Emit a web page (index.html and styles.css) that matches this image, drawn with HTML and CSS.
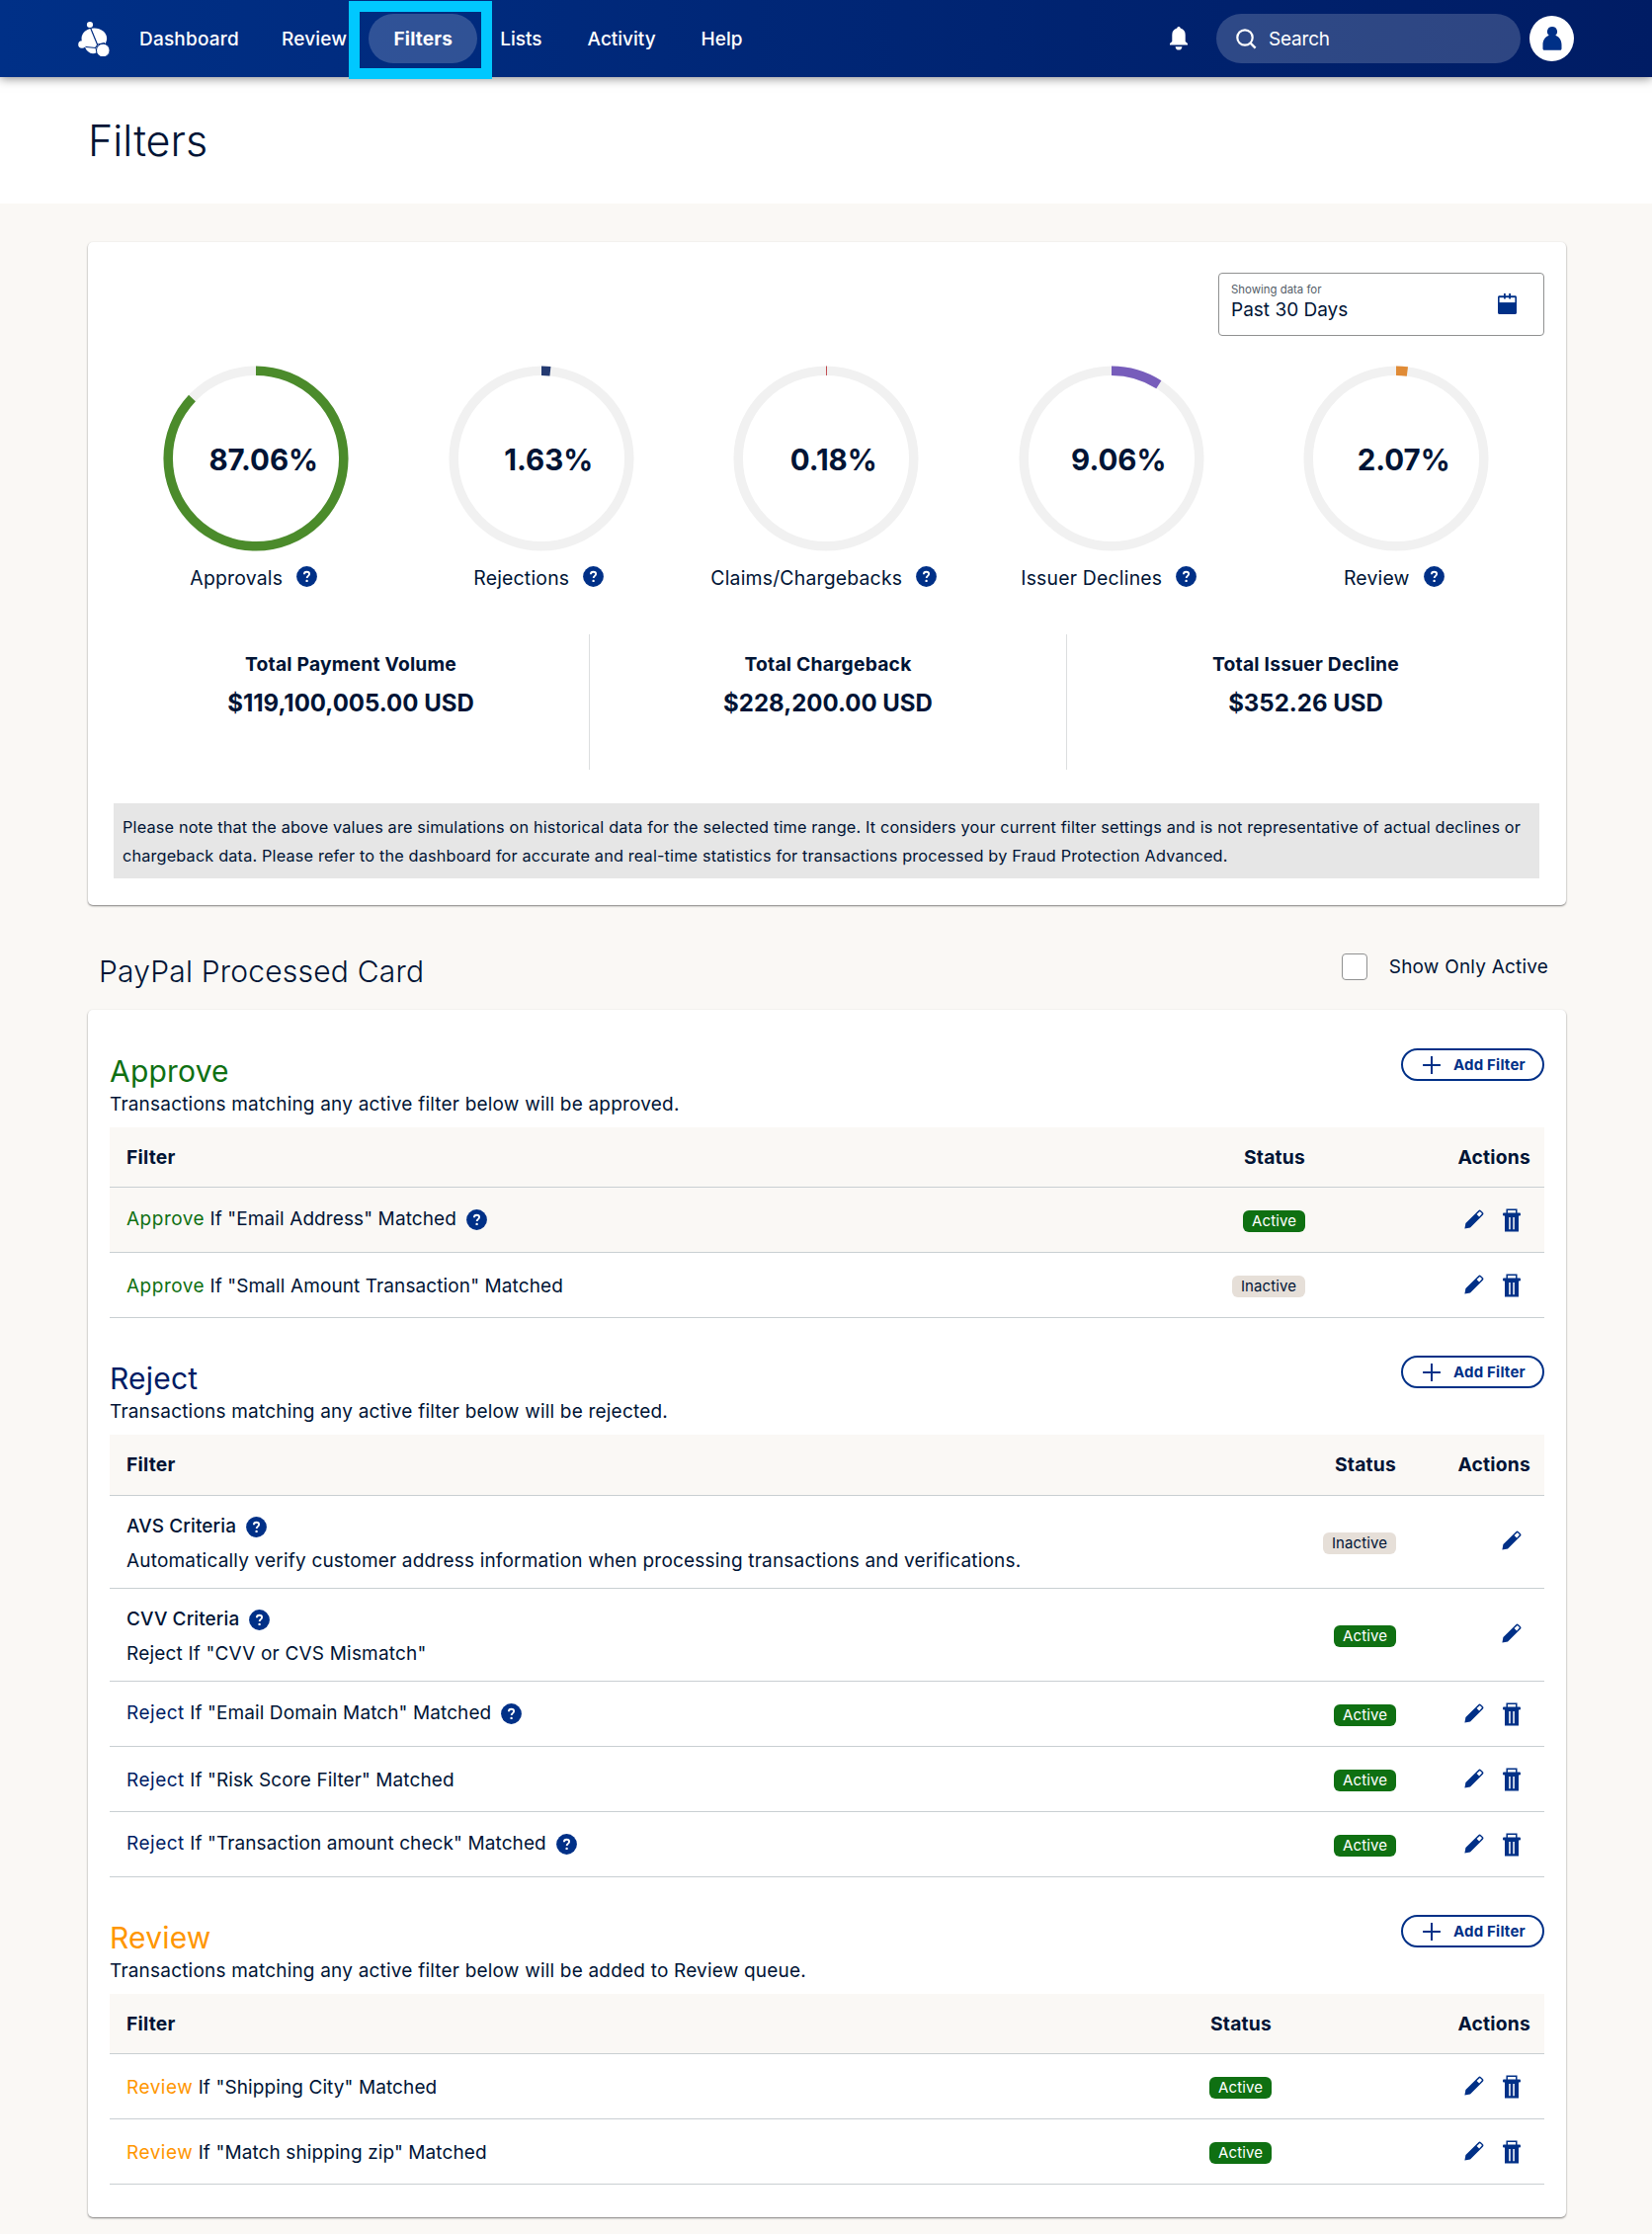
FILE: index.html
```
<!DOCTYPE html>
<html lang="en">
<head>
	<meta charset="UTF-8">
	<title>Filters</title>
	<link rel="stylesheet" href="styles.css">
</head>
<body>
	<svg class="sprite" width="0" height="0">
		<symbol id="help" viewBox="0 0 21 21">
			<circle cx="10.5" cy="10.5" r="10.4" fill="#003087"/>
			<path d="M7.9 8.3c0-1.6 1.1-2.5 2.6-2.5s2.6.9 2.6 2.2c0 1.9-2.4 1.9-2.4 4" fill="none" stroke="#fff" stroke-width="1.9"/>
			<circle cx="10.6" cy="14.9" r="1.2" fill="#fff"/>
		</symbol>
		<symbol id="pencil" viewBox="0 0 20 20">
			<path d="M.4 19.6l1-5.6L14.3 1.2c.9-.9 1.7-.9 2.6 0l1.9 1.9c.9.9.9 1.7 0 2.6L6 18.6z" fill="#003087"/>
			<path d="M12.6 4.9l2.7-2.5c.3-.3.6-.3.9 0l1.4 1.4c.3.3.3.6 0 .9l-2.5 2.7z" fill="#fff"/>
		</symbol>
		<symbol id="trash" viewBox="0 0 18 24">
			<path d="M4.2 5V1.2h9.6V5" fill="none" stroke="#003087" stroke-width="1.5"/>
			<rect y="4.6" width="18" height="3" rx="1" fill="#003087"/>
			<path d="M2 7h14v16.6H2zM6.2 9v12.3h1.5V9zM10.3 9v12.3h1.5V9z" fill="#003087" fill-rule="evenodd"/>
		</symbol>
		<symbol id="plus" viewBox="0 0 18 18">
			<path d="M9 .6v16.8M.6 9h16.8" stroke="#003087" stroke-width="2" stroke-linecap="round"/>
		</symbol>
	</svg>

	<div class="nav">
		<svg class="logo" viewBox="0 0 32 35">
			<g fill="#fff">
				<ellipse cx="12" cy="3" rx="3.1" ry="3"/>
				<ellipse cx="16.3" cy="17" rx="12.8" ry="10.5"/>
				<circle cx="4" cy="23" r="3.8"/>
				<path d="M7 25.5l9-1 3 6.5c-5 3-10 0-12-5.500z"/>
			</g>
			<circle cx="25.3" cy="29" r="6.8" fill="#fff" stroke="#002c80" stroke-width="1"/>
			<path d="M12.5 6l7 17M8 25.5l10 1M17.5 26.500l2.500-3.500 7-1.500" fill="none" stroke="#002c80" stroke-width="1.2"/>
		</svg>
		<ul class="menu">
			<li>Dashboard</li>
			<li>Review</li>
			<li class="current"><span>Filters</span><i class="focus"></i></li>
			<li>Lists</li>
			<li>Activity</li>
			<li>Help</li>
		</ul>
		<svg class="bell" viewBox="0 0 18 24">
			<path d="M9 0c1 0 1.700.7 1.700 1.600 3.300.8 5 3.400 5 6.600v6.900L18 17v1.500H0V17l2.300-1.900V8.200c0-3.200 1.700-5.800 5-6.600C7.300.7 8 0 9 0zM5.600 20.200h6.800c0 1.900-1.500 3.400-3.400 3.400s-3.400-1.500-3.400-3.400z" fill="#fff"/>
		</svg>
		<div class="search">
			<svg viewBox="0 0 21 21"><circle cx="9" cy="9" r="7.7" fill="none" stroke="#fff" stroke-width="2.2"/><path d="M14.6 14.600l5 5" stroke="#fff" stroke-width="2.4"/></svg>
			<span>Search</span>
		</div>
		<div class="avatar">
			<svg viewBox="0 0 20 24"><path d="M10 0a5 5 0 0 1 3.300 8.800c4 1.500 6.200 5 6.200 9.700v3.800c0 .9-.5 1.500-1.500 1.500H2C1 23.800.5 23.200.5 22.300v-3.800c0-4.700 2.200-8.200 6.200-9.700A5 5 0 0 1 10 0z" fill="#003087"/></svg>
		</div>
	</div>

	<div class="title">
		<h1>Filters</h1>
	</div>

	<div class="card stats">
		<div class="range">
			<div>
				<small>Showing data for</small>
				<p>Past 30 Days</p>
			</div>
			<svg viewBox="0 0 19 21"><path d="M1.500 2.300h16c.8 0 1.500.7 1.500 1.500v15.700c0 .8-.7 1.500-1.500 1.500h-16C.7 21 0 20.300 0 19.500V3.800c0-.8.700-1.500 1.500-1.500z" fill="#003087"/><path d="M1.600 4.200h15.800v4.900H1.600z" fill="#fff"/><path d="M6.900 0v5.500M12.100 0v5.500" stroke="#003087" stroke-width="1.8"/></svg>
		</div>
		<div class="rings">
			<div class="ring">
				<div class="chart">
					<svg viewBox="0 0 188 188"><circle class="track" cx="94" cy="94" r="88.8"/><circle class="bar green" cx="94" cy="94" r="88.8" pathLength="100" style="stroke-dasharray: 87.06 100"/></svg>
					<b>87.06%</b>
				</div>
				<p><span>Approvals</span><svg class="help"><use href="#help"/></svg></p>
			</div>
			<div class="ring">
				<div class="chart">
					<svg viewBox="0 0 188 188"><circle class="track" cx="94" cy="94" r="88.8"/><circle class="bar navy" cx="94" cy="94" r="88.8" pathLength="100" style="stroke-dasharray: 1.63 100"/></svg>
					<b>1.63%</b>
				</div>
				<p><span>Rejections</span><svg class="help"><use href="#help"/></svg></p>
			</div>
			<div class="ring">
				<div class="chart">
					<svg viewBox="0 0 188 188"><circle class="track" cx="94" cy="94" r="88.8"/><circle class="bar red" cx="94" cy="94" r="88.8" pathLength="100" style="stroke-dasharray: 0.18 100"/></svg>
					<b>0.18%</b>
				</div>
				<p><span>Claims/Chargebacks</span><svg class="help"><use href="#help"/></svg></p>
			</div>
			<div class="ring">
				<div class="chart">
					<svg viewBox="0 0 188 188"><circle class="track" cx="94" cy="94" r="88.8"/><circle class="bar purple" cx="94" cy="94" r="88.8" pathLength="100" style="stroke-dasharray: 9.06 100"/></svg>
					<b>9.06%</b>
				</div>
				<p><span>Issuer Declines</span><svg class="help"><use href="#help"/></svg></p>
			</div>
			<div class="ring">
				<div class="chart">
					<svg viewBox="0 0 188 188"><circle class="track" cx="94" cy="94" r="88.8"/><circle class="bar orange" cx="94" cy="94" r="88.8" pathLength="100" style="stroke-dasharray: 2.07 100"/></svg>
					<b>2.07%</b>
				</div>
				<p><span>Review</span><svg class="help"><use href="#help"/></svg></p>
			</div>
		</div>
		<div class="totals">
			<div><h4>Total Payment Volume</h4><strong>$119,100,005.00 USD</strong></div>
			<div><h4>Total Chargeback</h4><strong>$228,200.00 USD</strong></div>
			<div><h4>Total Issuer Decline</h4><strong>$352.26 USD</strong></div>
		</div>
		<div class="note">Please note that the above values are simulations on historical data for the selected time range. It considers your current filter settings and is not representative of actual declines or<br>chargeback data. Please refer to the dashboard for accurate and real-time statistics for transactions processed by Fraud Protection Advanced.</div>
	</div>

	<div class="section">
		<h2>PayPal Processed Card</h2>
		<label><i class="checkbox"></i><span>Show Only Active</span></label>
	</div>

	<div class="card filters">
		<div class="group approve">
			<div class="head">
				<div>
					<h3>Approve</h3>
					<p>Transactions matching any active filter below will be approved.</p>
				</div>
				<a class="add"><svg><use href="#plus"/></svg><span>Add Filter</span></a>
			</div>
			<table>
				<tr><th>Filter</th><th class="status">Status</th><th class="actions">Actions</th></tr>
				<tr class="hover">
					<td class="tip"><em>Approve</em> If "Email Address" Matched<svg class="help"><use href="#help"/></svg></td>
					<td class="status"><span class="badge on">Active</span></td>
					<td class="actions"><svg class="pencil"><use href="#pencil"/></svg><svg class="trash"><use href="#trash"/></svg></td>
				</tr>
				<tr>
					<td><em>Approve</em> If "Small Amount Transaction" Matched</td>
					<td class="status"><span class="badge">Inactive</span></td>
					<td class="actions"><svg class="pencil"><use href="#pencil"/></svg><svg class="trash"><use href="#trash"/></svg></td>
				</tr>
			</table>
		</div>

		<div class="group reject">
			<div class="head">
				<div>
					<h3>Reject</h3>
					<p>Transactions matching any active filter below will be rejected.</p>
				</div>
				<a class="add"><svg><use href="#plus"/></svg><span>Add Filter</span></a>
			</div>
			<table>
				<tr><th>Filter</th><th class="status">Status</th><th class="actions">Actions</th></tr>
				<tr class="tall">
					<td><b>AVS Criteria</b><svg class="help"><use href="#help"/></svg><p>Automatically verify customer address information when processing transactions and verifications.</p></td>
					<td class="status"><span class="badge">Inactive</span></td>
					<td class="actions"><svg class="pencil"><use href="#pencil"/></svg></td>
				</tr>
				<tr class="tall">
					<td><b>CVV Criteria</b><svg class="help"><use href="#help"/></svg><p>Reject If "CVV or CVS Mismatch"</p></td>
					<td class="status"><span class="badge on">Active</span></td>
					<td class="actions"><svg class="pencil"><use href="#pencil"/></svg></td>
				</tr>
				<tr>
					<td class="tip"><em>Reject</em> If "Email Domain Match" Matched<svg class="help"><use href="#help"/></svg></td>
					<td class="status"><span class="badge on">Active</span></td>
					<td class="actions"><svg class="pencil"><use href="#pencil"/></svg><svg class="trash"><use href="#trash"/></svg></td>
				</tr>
				<tr>
					<td><em>Reject</em> If "Risk Score Filter" Matched</td>
					<td class="status"><span class="badge on">Active</span></td>
					<td class="actions"><svg class="pencil"><use href="#pencil"/></svg><svg class="trash"><use href="#trash"/></svg></td>
				</tr>
				<tr>
					<td class="tip"><em>Reject</em> If "Transaction amount check" Matched<svg class="help"><use href="#help"/></svg></td>
					<td class="status"><span class="badge on">Active</span></td>
					<td class="actions"><svg class="pencil"><use href="#pencil"/></svg><svg class="trash"><use href="#trash"/></svg></td>
				</tr>
			</table>
		</div>

		<div class="group review">
			<div class="head">
				<div>
					<h3>Review</h3>
					<p>Transactions matching any active filter below will be added to Review queue.</p>
				</div>
				<a class="add"><svg><use href="#plus"/></svg><span>Add Filter</span></a>
			</div>
			<table>
				<tr><th>Filter</th><th class="status">Status</th><th class="actions">Actions</th></tr>
				<tr>
					<td><em>Review</em> If "Shipping City" Matched</td>
					<td class="status"><span class="badge on">Active</span></td>
					<td class="actions"><svg class="pencil"><use href="#pencil"/></svg><svg class="trash"><use href="#trash"/></svg></td>
				</tr>
				<tr>
					<td><em>Review</em> If "Match shipping zip" Matched</td>
					<td class="status"><span class="badge on">Active</span></td>
					<td class="actions"><svg class="pencil"><use href="#pencil"/></svg><svg class="trash"><use href="#trash"/></svg></td>
				</tr>
			</table>
		</div>
	</div>
</body>
</html>
```
FILE: styles.css
```
*{
	box-sizing: border-box;
}
body,h1,h2,h3,h4,p,ul{
	margin: 0;
	padding: 0;
}
body{
	background: #faf8f5;
	color: #001435;
	font-family: Inter, "Liberation Sans", sans-serif;
	font-size: 19px;
	line-height: 24px;
	letter-spacing: 0.2px;
}
svg{
	display: block;
	flex: none;
}
.sprite{
	position: absolute;
}

/* nav */
.nav{
	position: relative;
	display: flex;
	align-items: center;
	height: 78px;
	padding: 0 79px;
	background: linear-gradient(90deg, #003087, #001c64);
	box-shadow: 0 1px 10px rgba(0,0,0,0.5);
	color: #fff;
	font-weight: 500;
}
.logo{
	width: 32px;
	height: 35px;
}
.menu{
	display: flex;
	align-items: center;
	flex: 1;
	list-style: none;
	margin-left: 30px;
}
.menu li{
	margin-right: 43px;
	padding-top: 2px;
}
.menu .current{
	position: relative;
	height: 50px;
	line-height: 48px;
	width: 110px;
	margin: 0 23px 0 -21px;
	border-radius: 25px;
	background: rgba(255,255,255,0.19);
	text-align: center;
	font-weight: 700;
}
.menu .current ~ li{
	margin-right: 46px;
	letter-spacing: 0;
}
.focus{
	position: absolute;
	left: -20px;
	top: -13px;
	width: 145px;
	height: 79px;
	border: 11px solid #00c8ff;
}
.bell{
	width: 18px;
	height: 24px;
	margin-right: 29px;
}
.search{
	display: flex;
	align-items: center;
	width: 308px;
	height: 50px;
	padding-left: 20px;
	border-radius: 25px;
	background: rgba(255,255,255,0.18);
	font-weight: 400;
	letter-spacing: -0.2px;
}
.search svg{
	width: 21px;
	height: 21px;
	margin-right: 12px;
}
.search span{
	padding-top: 2px;
}
.avatar{
	width: 45px;
	height: 46px;
	margin-left: 9px;
	padding: 11px 12.5px;
	border-radius: 50%;
	background: #fff;
}
.avatar svg{
	width: 20px;
	height: 24px;
}

.title{
	height: 128px;
	padding: 42px 89px;
	background: #fff;
}
.title h1{
	font-size: 43px;
	line-height: 44px;
	font-weight: 300;
	letter-spacing: 0;
}

.card{
	width: 1496px;
	margin: 0 0 0 89px;
	border-radius: 5px;
	background: #fff;
	box-shadow: 0 1px 2px rgba(0,0,0,0.5);
}

/* stats */
.stats{
	height: 671px;
	margin-top: 39px;
	padding: 31px 22px 0 26px;
}
.range{
	display: flex;
	align-items: center;
	justify-content: space-between;
	width: 330px;
	height: 64px;
	margin-left: auto;
	padding: 0 27px 0 12px;
	border: 1px solid #909191;
	border-radius: 4px;
	letter-spacing: 0;
}
.range small{
	display: block;
	margin-top: -5px;
	color: #545d68;
	font-size: 11.4px;
	line-height: 16px;
}
.range p{
	line-height: 26px;
}
.range svg{
	width: 19px;
	height: 21px;
	margin-bottom: 2px;
}
.rings{
	display: grid;
	grid-template-columns: repeat(5, 288.5px);
	margin-top: 30px;
}
.ring{
	display: flex;
	flex-direction: column;
	align-items: center;
}
.chart{
	display: grid;
	width: 188px;
	height: 188px;
}
.chart svg{
	grid-area: 1 / 1;
	transform: rotate(-90deg);
}
.chart circle{
	fill: none;
	stroke-width: 9.5;
}
.chart .track{
	stroke: #f1f1f1;
}
.green{
	stroke: #4b8b2b;
}
.navy{
	stroke: #253b72;
}
.red{
	stroke: #c0464b;
}
.purple{
	stroke: #775dbb;
}
.orange{
	stroke: #e08b36;
}
.chart b{
	grid-area: 1 / 1;
	place-self: center;
	padding: 2px 0 0 15px;
	font-size: 29.5px;
	line-height: 36px;
	font-weight: 700;
	letter-spacing: 0;
}
.ring p{
	display: flex;
	align-items: center;
	gap: 14px;
	margin: 14px 5px 0 0;
	font-size: 19.4px;
	line-height: 26px;
}
.help{
	width: 21px;
	height: 21px;
}
.ring .help{
	margin-top: -3px;
}
.totals{
	display: grid;
	grid-template-columns: repeat(3, 483px);
	margin: 44px 0 0 -1px;
}
.totals div{
	height: 137px;
	padding-top: 18px;
	border-right: 1px solid #dcdedf;
	text-align: center;
}
.totals div:last-child{
	border: 0;
}
.totals h4{
	font-size: 19.3px;
	font-weight: 700;
}
.totals strong{
	display: block;
	margin-top: 14px;
	font-size: 24px;
	line-height: 28px;
	font-weight: 700;
	letter-spacing: 0;
}
.note{
	width: 1443px;
	height: 76px;
	margin-top: 34px;
	padding: 10px 9px;
	background: #e6e6e6;
	font-size: 16.3px;
	line-height: 29px;
	letter-spacing: 0.155px;
	white-space: nowrap;
}

.section{
	display: flex;
	justify-content: space-between;
	height: 106px;
	padding: 46px 105px 0 100px;
}
.section h2{
	margin-top: 1px;
	font-size: 30px;
	line-height: 40px;
	font-weight: 300;
}
.section label{
	display: flex;
	align-items: center;
	height: 32px;
}
.section label span{
	padding-top: 2px;
}
.checkbox{
	width: 26px;
	height: 27px;
	margin-right: 22px;
	border: 1px solid #909191;
	border-radius: 4px;
	background: #fff;
}

/* filters */
.filters{
	height: 1222px;
	padding: 39px 22px 0;
	margin-bottom: 17px;
}
.head{
	display: flex;
	justify-content: space-between;
	height: 80px;
}
.head h3{
	margin: 5px 0 4px;
	font-size: 30px;
	line-height: 36px;
	font-weight: 400;
}
.add{
	display: flex;
	align-items: center;
	width: 145px;
	height: 33px;
	padding-left: 20px;
	border: 2px solid #003087;
	border-radius: 17px;
	color: #003087;
	font-size: 15px;
	font-weight: 700;
}
.add svg{
	width: 18px;
	height: 18px;
	margin-right: 13px;
}
table{
	width: 1452px;
	border-collapse: separate;
	border-spacing: 0;
	table-layout: fixed;
}
th,td{
	padding: 0;
	border-bottom: 1px solid #c9cfd2;
	text-align: left;
	vertical-align: top;
}
th{
	height: 61px;
	padding-top: 18px;
	background: #faf8f5;
	font-size: 19.3px;
	font-weight: 700;
}
td{
	height: 66px;
	padding-top: 22px;
	letter-spacing: 0.1px;
}
th:first-child,td:first-child{
	padding-left: 17px;
}
.hover td{
	background: #faf8f5;
}
td em{
	font-style: normal;
	letter-spacing: 0.5px;
}
td b{
	font-weight: 500;
}
td.tip{
	padding-top: 20px;
}
td .help{
	display: inline-block;
	margin: 0 0 -5px 10px;
	vertical-align: baseline;
}
.status{
	width: 200px;
	text-align: right;
}
.actions{
	width: 242px;
	padding-right: 14px;
	text-align: right;
}
.reject .actions{
	width: 150px;
}
.review .actions{
	width: 276px;
}
td.status{
	padding-top: 23px;
}
td.actions{
	padding: 22px 24px 0 0;
	line-height: 0;
}
.badge{
	display: inline-block;
	height: 22px;
	padding: 0 9px;
	border-radius: 6px;
	background: #e6dfd8;
	font-size: 15px;
	line-height: 22px;
	vertical-align: top;
}
.badge.on{
	background: #0f7012;
	color: #fff;
}
.pencil,.trash{
	display: inline-block;
	vertical-align: top;
}
.pencil{
	width: 20px;
	height: 20px;
}
.trash{
	width: 18px;
	height: 24px;
	margin: -1px 0 0 19px;
}
.tall td{
	height: 94px;
	padding-top: 19px;
}
.tall p{
	margin-top: 11px;
	letter-spacing: 0.19px;
}
.tall td.status{
	padding-top: 37px;
}
.tall td.actions{
	padding: 35px 23px 0 0;
}
.approve h3,.approve em{
	color: #0f7012;
}
.reject h3,.reject em{
	color: #001c64;
}
.review h3,.review em{
	color: #ff9600;
}
.reject,.review{
	margin-top: 38px;
}
.reject th{
	height: 62px;
}
```
